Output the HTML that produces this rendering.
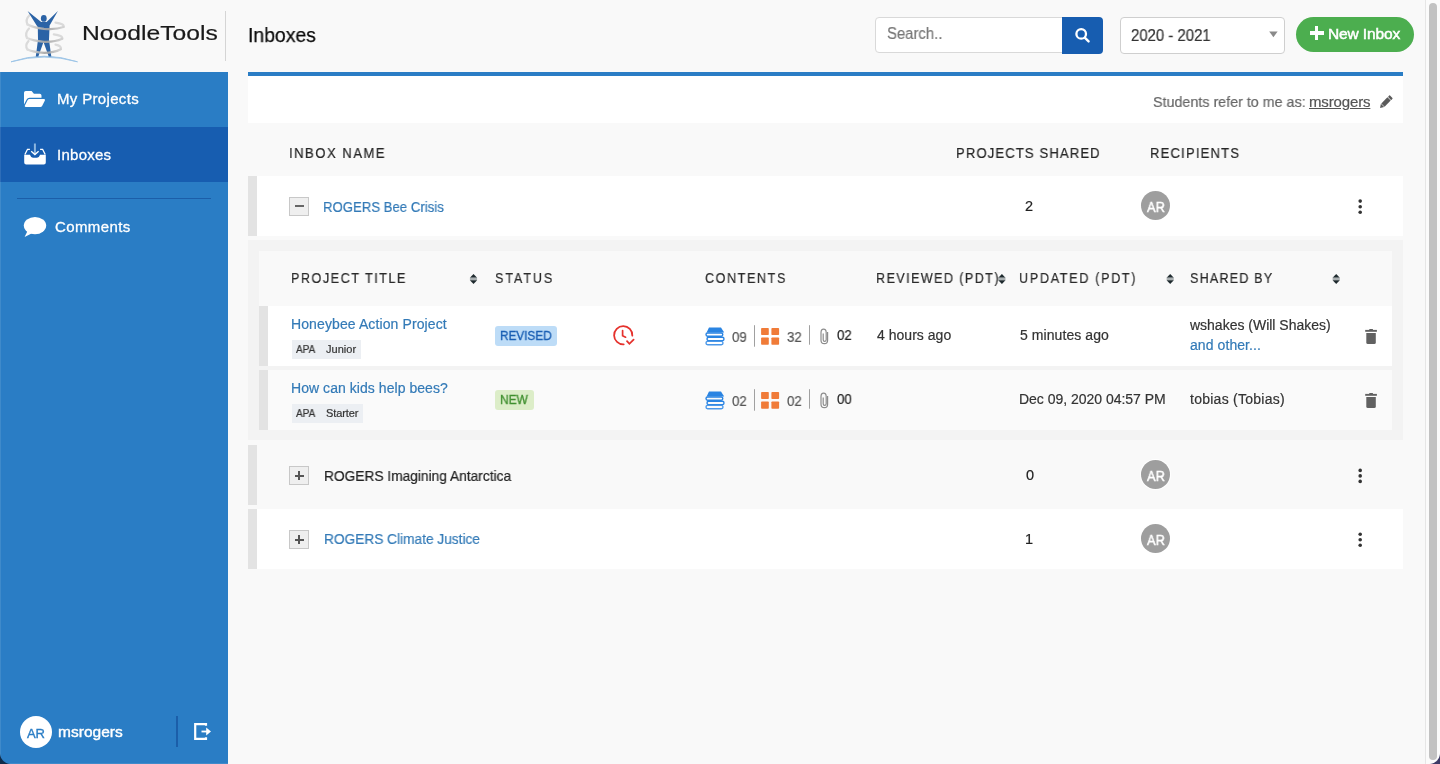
<!DOCTYPE html>
<html><head><meta charset="utf-8">
<style>
*{box-sizing:border-box;margin:0;padding:0}
html,body{width:1440px;height:764px;overflow:hidden;background:#f9f9f9;font-family:"Liberation Sans",sans-serif;color:#222}
body{position:relative}
.a{position:absolute}
.t{position:absolute;white-space:pre;will-change:transform;-webkit-text-stroke:0.2px currentColor}
svg{position:absolute;overflow:visible}
.bar{position:absolute;background:#e3e3e3}
.tog{position:absolute;left:289px;width:20px;height:19px;border:1px solid #c8c8c8;background:#efefef}
.av{position:absolute;left:1141px;width:29px;height:29px;border-radius:50%;background:#9e9e9e}
</style></head><body>
<!-- ===== header ===== -->
<svg style="left:0;top:0" width="90" height="72" viewBox="0 0 90 72">
  <defs>
    <linearGradient id="sw" x1="0" y1="0" x2="1" y2="0"><stop offset="0" stop-color="#dedede"/><stop offset="0.55" stop-color="#a4a4a4"/><stop offset="1" stop-color="#d2d2d2"/></linearGradient>
    <linearGradient id="arcg" x1="0" y1="0" x2="1" y2="0"><stop offset="0" stop-color="#b9d5ee"/><stop offset="0.5" stop-color="#8fbbe0"/><stop offset="1" stop-color="#b9d5ee"/></linearGradient>
  </defs>
  <path d="M11 61.8 Q44 50.6 77.5 61.8 Q44 52.4 11 61.8 Z" fill="url(#arcg)" stroke="#9cc4e6" stroke-width="0.9"/>
  <g fill="none" stroke="#dadada" stroke-width="2.2" stroke-linecap="round">
    <path d="M29.5 15.2 Q25 19.5 27.5 24.5"/>
    <path d="M55.5 22.6 Q64.5 23.8 63.6 27"/>
    <path d="M29 28.5 Q24.5 33 27 38"/>
    <path d="M53.8 34.3 Q63 35.4 62.2 38.8"/>
    <path d="M28.5 41 Q24.5 45.5 27.5 49.5"/>
    <path d="M55.5 44.6 Q61.8 45.8 60.8 49.2"/>
  </g>
  <path d="M27.6 11.1 L41.2 22 L46.6 22 L57.9 11.1 L49.6 25.6 L49 39.8 L51.3 56.4 L48.7 56.4 L43.5 42 L38.3 56.4 L35.8 56.4 L38 39.8 L37.8 27.2 Z" fill="#2b63a6"/>
  <ellipse cx="43.8" cy="18.4" rx="2.9" ry="3.4" fill="#2b63a6"/>
  <g fill="none" stroke="url(#sw)" stroke-width="2.3" stroke-linecap="round" opacity="0.9">
    <path d="M27.5 24.5 Q33 27.5 44 28.8 Q56 29.8 63.6 27"/>
    <path d="M27 38 Q33 40.8 44 41.8 Q55 42.2 62.2 38.8"/>
    <path d="M27.5 49.5 Q33 52.2 44 52.8 Q54 52.8 60.8 49.2"/>
  </g>
</svg>
<div class="a" style="left:225px;top:11px;width:1px;height:50px;background:#d5d5d5"></div>

<!-- search -->
<div class="a" style="left:875px;top:17px;width:188px;height:36px;background:#fff;border:1px solid #d9d9d9;border-radius:4px 0 0 4px"></div>
<div class="a" style="left:1062px;top:17px;width:41px;height:37px;background:#175db0;border-radius:0 4px 4px 0"></div>
<svg style="left:1070px;top:22px" width="25" height="25" viewBox="1070 22 25 25">
  <circle cx="1081.2" cy="33.9" r="4.8" fill="none" stroke="#fff" stroke-width="2.3"/>
  <path d="M1085 37.8 L1088.6 41.4" stroke="#fff" stroke-width="2.4" stroke-linecap="round"/>
</svg>
<!-- select -->
<div class="a" style="left:1120px;top:17px;width:165px;height:37px;background:#fff;border:1px solid #cfcfcf;border-radius:4px"></div>
<svg style="left:1265px;top:28px" width="16" height="12" viewBox="1265 28 16 12">
  <path d="M1269.2 31.5 L1277.6 31.5 L1273.4 37.3 Z" fill="#8a8a8a"/>
</svg>
<!-- new inbox -->
<div class="a" style="left:1296px;top:17px;width:118px;height:35px;background:#4cae4f;border-radius:18px"></div>
<div class="a" style="left:1314.8px;top:26px;width:3.4px;height:13.8px;background:#fff"></div>
<div class="a" style="left:1309.5px;top:31.2px;width:14.1px;height:3.6px;background:#fff"></div>

<!-- ===== sidebar ===== -->
<div class="a" style="left:0;top:72px;width:228px;height:692px;background:#2a7dc5"></div>
<div class="a" style="left:0;top:127px;width:228px;height:55px;background:#175db0"></div>
<div class="a" style="left:17px;top:198px;width:194px;height:1px;background:#1b5ea9"></div>
<!-- folder icon -->
<svg style="left:24px;top:91px" width="21" height="16" viewBox="0 64 576 384" preserveAspectRatio="none">
  <path fill="#fff" d="M572.694 292.093L500.27 416.248A63.997 63.997 0 0 1 444.989 448H45.025c-18.523 0-30.064-20.093-20.731-36.093l72.424-124.155A64 64 0 0 1 152 256h399.964c18.523 0 30.064 20.093 20.73 36.093zM152 224h328v-48c0-26.51-21.49-48-48-48H272l-64-64H48C21.49 64 0 85.49 0 112v278.046l69.077-118.418C86.214 242.25 117.989 224 152 224z"/>
</svg>
<!-- inbox icon -->
<svg style="left:20px;top:140px" width="30" height="28" viewBox="20 140 30 28">
  <path d="M34.9 143.5 L34.9 154" stroke="#8cb6de" stroke-width="2"/>
  <path d="M31.2 151.2 L34.9 154.6 L38.6 151.2" fill="none" stroke="#fff" stroke-width="1.3"/>
  <path d="M29.9 149.3 L27.5 149.3 L24.9 154.5 M40.1 149.3 L42.6 149.3 L45.2 154.5" fill="none" stroke="#fff" stroke-width="1.3"/>
  <path d="M24.2 154.7 L29.9 154.7 Q31 157.8 33 157.8 L37 157.8 Q39 157.8 40.1 154.7 L45.8 154.7 L45.8 162.4 Q45.8 164.4 43.8 164.4 L26.2 164.4 Q24.2 164.4 24.2 162.4 Z" fill="#fff"/>
</svg>
<!-- comment icon -->
<svg style="left:20px;top:212px" width="30" height="30" viewBox="20 212 30 30">
  <ellipse cx="35" cy="225.6" rx="11.2" ry="8.7" fill="#fff"/>
  <path d="M27.5 231 L24.6 237 L31.5 233.5 Z" fill="#fff"/>
</svg>
<!-- bottom user -->
<div class="a" style="left:19.5px;top:715.5px;width:32px;height:32px;border-radius:50%;background:#fff"></div>
<div class="a" style="left:176px;top:716px;width:2px;height:31px;background:#1b5ea9"></div>
<svg style="left:188px;top:716px" width="28" height="30" viewBox="188 716 28 30">
  <path d="M206 725.8 L206 724.1 L195.2 724.1 L195.2 738.9 L206 738.9 L206 737.2" fill="none" stroke="#fff" stroke-width="2.2"/>
  <path d="M201.5 731.5 L208 731.5" stroke="#fff" stroke-width="1.8"/>
  <path d="M206.2 727.6 L211 731.5 L206.2 735.4 Z" fill="#fff"/>
</svg>

<!-- ===== panel ===== -->
<div class="a" style="left:248px;top:72px;width:1155px;height:51px;background:#fff;border-top:4px solid #2a7dc5"></div>
<svg style="left:1376px;top:92px" width="20" height="20" viewBox="1376 92 20 20">
  <g transform="rotate(45 1386 102)">
    <rect x="1383.7" y="94.6" width="4.6" height="2.4" rx="0.6" fill="#5a5a5a"/>
    <rect x="1383.7" y="97.7" width="4.6" height="8.6" fill="#5a5a5a"/>
    <path d="M1383.7 106.9 L1388.3 106.9 L1386 110.4 Z" fill="#5a5a5a"/>
  </g>
</svg>

<!-- ===== rows ===== -->
<div class="a" style="left:248px;top:176px;width:1155px;height:60px;background:#fff"></div>
<div class="bar" style="left:248px;top:176px;width:9px;height:60px"></div>
<div class="tog" style="top:197px"></div>
<div class="a" style="left:295px;top:205.3px;width:8.5px;height:1.7px;background:#666"></div>

<!-- expanded -->
<div class="a" style="left:248px;top:240px;width:1155px;height:200px;background:#f3f3f3"></div>
<div class="a" style="left:259px;top:251px;width:1133px;height:55px;background:#f9f9f9"></div>
<div class="a" style="left:259px;top:306px;width:1133px;height:60px;background:#fff"></div>
<div class="bar" style="left:259px;top:306px;width:9px;height:60px"></div>
<div class="a" style="left:259px;top:370px;width:1133px;height:60px;background:#fafafa"></div>
<div class="bar" style="left:259px;top:370px;width:9px;height:60px"></div>

<div class="a" style="left:248px;top:445px;width:1155px;height:60px;background:#f9f9f9"></div>
<div class="bar" style="left:248px;top:445px;width:9px;height:60px"></div>
<div class="tog" style="top:466px"></div>
<div class="a" style="left:295px;top:474.5px;width:8.6px;height:2px;background:#555"></div>
<div class="a" style="left:298.3px;top:471px;width:2px;height:9px;background:#555"></div>

<div class="a" style="left:248px;top:509px;width:1155px;height:60px;background:#fff"></div>
<div class="bar" style="left:248px;top:509px;width:9px;height:60px"></div>
<div class="tog" style="top:530px"></div>
<div class="a" style="left:295px;top:538.5px;width:8.6px;height:2px;background:#555"></div>
<div class="a" style="left:298.3px;top:535px;width:2px;height:9px;background:#555"></div>

<!-- avatars -->
<div class="av" style="top:191px"></div>
<div class="av" style="top:460px;box-shadow:0 0 0 1px #fff"></div>
<div class="av" style="top:524px"></div>
<!-- kebabs -->
<svg style="left:1350px;top:190px" width="20" height="400" viewBox="1350 190 20 400">
  <g fill="#333">
    <circle cx="1360.2" cy="201.1" r="1.8"/><circle cx="1360.2" cy="206.7" r="1.8"/><circle cx="1360.2" cy="212.2" r="1.8"/>
    <circle cx="1360.2" cy="470.4" r="1.8"/><circle cx="1360.2" cy="475.9" r="1.8"/><circle cx="1360.2" cy="481.4" r="1.8"/>
    <circle cx="1360.2" cy="534.2" r="1.8"/><circle cx="1360.2" cy="539.7" r="1.8"/><circle cx="1360.2" cy="545.2" r="1.8"/>
  </g>
</svg>
<!-- sort icons -->
<svg style="left:460px;top:268px" width="900" height="20" viewBox="460 268 900 20">
  
  <g transform="translate(469.9 273.9)"><path d="M0 3.8 L3.6 0 L7.2 3.8 Z" fill="#1e2a2e"/><rect x="0" y="3.8" width="7.2" height="2.5" fill="#aab0b2"/><path d="M0 6.4 L3.6 10 L7.2 6.4 Z" fill="#1e2a2e"/></g>
  <g transform="translate(998.3 273.9)"><path d="M0 3.8 L3.6 0 L7.2 3.8 Z" fill="#1e2a2e"/><rect x="0" y="3.8" width="7.2" height="2.5" fill="#aab0b2"/><path d="M0 6.4 L3.6 10 L7.2 6.4 Z" fill="#1e2a2e"/></g>
  <g transform="translate(1166.6 273.9)"><path d="M0 3.8 L3.6 0 L7.2 3.8 Z" fill="#1e2a2e"/><rect x="0" y="3.8" width="7.2" height="2.5" fill="#aab0b2"/><path d="M0 6.4 L3.6 10 L7.2 6.4 Z" fill="#1e2a2e"/></g>
  <g transform="translate(1332.6 273.9)"><path d="M0 3.8 L3.6 0 L7.2 3.8 Z" fill="#1e2a2e"/><rect x="0" y="3.8" width="7.2" height="2.5" fill="#aab0b2"/><path d="M0 6.4 L3.6 10 L7.2 6.4 Z" fill="#1e2a2e"/></g>
</svg>

<!-- tags and badges -->
<div class="a" style="left:292px;top:340px;width:69px;height:19px;background:#eceff3"></div>
<div class="a" style="left:292px;top:404px;width:71px;height:19px;background:#eceff3"></div>
<div class="a" style="left:495px;top:326px;width:62px;height:20px;background:#bddcf7;border-radius:3px"></div>
<div class="a" style="left:495px;top:390px;width:39px;height:20px;background:#dcedc8;border-radius:3px"></div>

<!-- clock -->
<svg style="left:608px;top:320px" width="32" height="30" viewBox="608 320 32 30">
  <path d="M632.3 335.6 A9.1 9.1 0 1 0 623.7 344.3" fill="none" stroke="#e5322d" stroke-width="1.8" stroke-linecap="round"/>
  <path d="M622.6 330.6 L622.6 335.8 L625.6 337.2" fill="none" stroke="#e5322d" stroke-width="1.7" stroke-linecap="round"/>
  <path d="M627 341.2 L629.4 343.8 L633.6 339.6" fill="none" stroke="#e5322d" stroke-width="1.8" stroke-linecap="round"/>
</svg>

<!-- contents icons -->
<svg style="left:700px;top:320px" width="140" height="100" viewBox="700 320 140 100">
  
  <g transform="translate(0 0)">
      <path d="M709 327.5 L721 327.5 L724.2 332.6 L706.6 332.6 Z" fill="#2a84e2"/>
      <rect x="706" y="333" width="16.8" height="3.2" rx="1.6" fill="none" stroke="#2a84e2" stroke-width="1.4"/>
      <rect x="707" y="337.2" width="17" height="3.4" rx="1.7" fill="none" stroke="#2a84e2" stroke-width="1.4"/>
      <rect x="706" y="341.4" width="17" height="3.4" rx="1.7" fill="none" stroke="#4c98e8" stroke-width="1.4"/>
    </g><g transform="translate(0 0)" fill="#f07b38">
      <rect x="761.1" y="327.9" width="7.7" height="7.2" rx="0.8"/>
      <rect x="771.4" y="327.9" width="7.7" height="7.2" rx="0.8"/>
      <rect x="761.1" y="337.5" width="7.7" height="7.2" rx="0.8"/>
      <rect x="771.4" y="337.5" width="7.7" height="7.2" rx="0.8"/>
    </g><g transform="translate(0 0)">
      <path d="M827.6 332 L827.6 340.2 Q827.6 343.7 824.4 343.7 Q821 343.7 821 340.2 L821 332.7 Q821 329.2 823.6 329.2 Q826.2 329.2 826.2 332.7 L826.2 339.7 Q826.2 341.3 824.6 341.3 Q823.2 341.3 823.2 339.7 L823.2 333.4" fill="none" stroke="#8c8c8c" stroke-width="1.2"/>
    </g><g transform="translate(0 0)" fill="#a0a0a0">
      <rect x="754" y="325.2" width="1" height="21.5"/>
      <rect x="809" y="325.2" width="1" height="19.5"/>
    </g>
  <g transform="translate(0 64)">
      <path d="M709 327.5 L721 327.5 L724.2 332.6 L706.6 332.6 Z" fill="#2a84e2"/>
      <rect x="706" y="333" width="16.8" height="3.2" rx="1.6" fill="none" stroke="#2a84e2" stroke-width="1.4"/>
      <rect x="707" y="337.2" width="17" height="3.4" rx="1.7" fill="none" stroke="#2a84e2" stroke-width="1.4"/>
      <rect x="706" y="341.4" width="17" height="3.4" rx="1.7" fill="none" stroke="#4c98e8" stroke-width="1.4"/>
    </g><g transform="translate(0 64)" fill="#f07b38">
      <rect x="761.1" y="327.9" width="7.7" height="7.2" rx="0.8"/>
      <rect x="771.4" y="327.9" width="7.7" height="7.2" rx="0.8"/>
      <rect x="761.1" y="337.5" width="7.7" height="7.2" rx="0.8"/>
      <rect x="771.4" y="337.5" width="7.7" height="7.2" rx="0.8"/>
    </g><g transform="translate(0 64)">
      <path d="M827.6 332 L827.6 340.2 Q827.6 343.7 824.4 343.7 Q821 343.7 821 340.2 L821 332.7 Q821 329.2 823.6 329.2 Q826.2 329.2 826.2 332.7 L826.2 339.7 Q826.2 341.3 824.6 341.3 Q823.2 341.3 823.2 339.7 L823.2 333.4" fill="none" stroke="#8c8c8c" stroke-width="1.2"/>
    </g><g transform="translate(0 64)" fill="#a0a0a0">
      <rect x="754" y="325.2" width="1" height="21.5"/>
      <rect x="809" y="325.2" width="1" height="19.5"/>
    </g>
</svg>
<!-- trash -->
<svg style="left:1360px;top:325px" width="24" height="90" viewBox="1360 325 24 90">
  
  <g transform="translate(0 0)" fill="#616161">
    <rect x="1365.2" y="329.9" width="11.7" height="1.9"/>
    <rect x="1369.2" y="329.1" width="3.8" height="1.2" rx="0.5"/>
    <path d="M1366.3 333 L1375.8 333 L1375.8 342.6 Q1375.8 344.1 1374.3 344.1 L1367.8 344.1 Q1366.3 344.1 1366.3 342.6 Z"/>
  </g><g transform="translate(0 64)" fill="#616161">
    <rect x="1365.2" y="329.9" width="11.7" height="1.9"/>
    <rect x="1369.2" y="329.1" width="3.8" height="1.2" rx="0.5"/>
    <path d="M1366.3 333 L1375.8 333 L1375.8 342.6 Q1375.8 344.1 1374.3 344.1 L1367.8 344.1 Q1366.3 344.1 1366.3 342.6 Z"/>
  </g>
</svg>

<!-- scrollbar -->
<div class="a" style="left:1425px;top:0;width:15px;height:764px;background:#fbfbfb;border-left:1px solid #e6e6e6"></div>
<div class="a" style="left:1429px;top:3px;width:8px;height:757px;background:#c2c2c2;border-radius:4px"></div>

<!-- window edge highlight -->
<div class="a" style="left:0;top:0;width:1px;height:764px;background:rgba(255,255,255,0.1)"></div>
<div class="a" style="left:0;top:763px;width:1440px;height:1px;background:rgba(255,255,255,0.1)"></div>
<!-- window corners -->
<div class="a" style="left:0;top:753px;width:11px;height:11px;background:radial-gradient(circle at 11px 0,rgba(0,0,0,0) 10.5px,#0e2b4b 11.5px)"></div>
<div class="a" style="left:1429px;top:753px;width:11px;height:11px;background:radial-gradient(circle at 0 0,rgba(0,0,0,0) 10.5px,#3d3a66 11.5px)"></div>
<div class="t" style="left:82.13px;top:22.22px;font-size:21px;line-height:21px;color:#1a1a1a;font-weight:400;transform:scaleX(1.1747);transform-origin:0 0;-webkit-text-stroke:0.2px #1a1a1a">NoodleTools</div>
<div class="t" style="left:247.78px;top:24.97px;font-size:20px;line-height:20px;color:#0a0a0a;font-weight:400;transform:scaleX(0.9689);transform-origin:0 0;-webkit-text-stroke:0.25px #0a0a0a">Inboxes</div>
<div class="t" style="left:56.60px;top:91.40px;font-size:15px;line-height:15px;color:#fff;font-weight:400;letter-spacing:0.335px;-webkit-text-stroke:0.3px #fff">My Projects</div>
<div class="t" style="left:56.60px;top:146.50px;font-size:15px;line-height:15px;color:#fff;font-weight:400;letter-spacing:0.261px;-webkit-text-stroke:0.3px #fff">Inboxes</div>
<div class="t" style="left:54.70px;top:219.30px;font-size:15px;line-height:15px;color:#fff;font-weight:400;letter-spacing:0.383px;-webkit-text-stroke:0.3px #fff">Comments</div>
<div class="t" style="left:57.75px;top:723.68px;font-size:15.5px;line-height:15.5px;color:#fff;font-weight:400;letter-spacing:0.022px;-webkit-text-stroke:0.4px #fff">msrogers</div>
<div class="t" style="left:26.70px;top:726.79px;font-size:13px;line-height:13px;color:#2a7dc5;font-weight:400;letter-spacing:-0.171px;-webkit-text-stroke:0.35px #2a7dc5">AR</div>
<div class="t" style="left:887.20px;top:26.25px;font-size:16px;line-height:16px;color:#777;font-weight:400;transform:scaleX(0.9288);transform-origin:0 0;">Search..</div>
<div class="t" style="left:1130.50px;top:28.19px;font-size:15.6px;line-height:15.6px;color:#333;font-weight:400;transform:scaleX(0.9568);transform-origin:0 0;">2020 - 2021</div>
<div class="t" style="left:1328.20px;top:26.38px;font-size:15.5px;line-height:15.5px;color:#fff;font-weight:400;letter-spacing:-0.135px;-webkit-text-stroke:0.5px #fff">New Inbox</div>
<div class="t" style="left:1153.10px;top:93.90px;font-size:15px;line-height:15px;color:#666;font-weight:400;transform:scaleX(0.9534);transform-origin:0 0;">Students refer to me as:</div>
<div class="t" style="left:1309.30px;top:93.90px;font-size:15px;line-height:15px;color:#555;font-weight:400;letter-spacing:-0.145px;text-decoration:underline;text-underline-offset:1px">msrogers</div>
<div class="t" style="left:289.10px;top:145.72px;font-size:14.5px;line-height:14.5px;color:#262626;font-weight:400;letter-spacing:1.687px;transform:scaleX(0.9000);transform-origin:0 0;">INBOX NAME</div>
<div class="t" style="left:956.40px;top:145.72px;font-size:14.5px;line-height:14.5px;color:#262626;font-weight:400;letter-spacing:1.270px;transform:scaleX(0.9000);transform-origin:0 0;">PROJECTS SHARED</div>
<div class="t" style="left:1149.70px;top:145.72px;font-size:14.5px;line-height:14.5px;color:#262626;font-weight:400;letter-spacing:1.320px;transform:scaleX(0.9000);transform-origin:0 0;">RECIPIENTS</div>
<div class="t" style="left:323.39px;top:199.62px;font-size:14.5px;line-height:14.5px;color:#337ab7;font-weight:400;transform:scaleX(0.9082);transform-origin:0 0;">ROGERS Bee Crisis</div>
<div class="t" style="left:1025.30px;top:198.62px;font-size:14.5px;line-height:14.5px;color:#222;font-weight:400;letter-spacing:0.000px;">2</div>
<div class="t" style="left:323.55px;top:468.82px;font-size:14.5px;line-height:14.5px;color:#222;font-weight:400;transform:scaleX(0.9471);transform-origin:0 0;">ROGERS Imagining Antarctica</div>
<div class="t" style="left:1025.80px;top:467.72px;font-size:14.5px;line-height:14.5px;color:#222;font-weight:400;letter-spacing:0.000px;">0</div>
<div class="t" style="left:323.56px;top:532.32px;font-size:14.5px;line-height:14.5px;color:#337ab7;font-weight:400;transform:scaleX(0.9445);transform-origin:0 0;">ROGERS Climate Justice</div>
<div class="t" style="left:1024.50px;top:532.32px;font-size:14.5px;line-height:14.5px;color:#222;font-weight:400;letter-spacing:0.000px;">1</div>
<div class="t" style="left:1147.00px;top:199.62px;font-size:14.5px;line-height:14.5px;color:#fff;font-weight:400;transform:scaleX(0.8845);transform-origin:0 0;-webkit-text-stroke:0.45px #fff">AR</div>
<div class="t" style="left:1147.00px;top:468.72px;font-size:14.5px;line-height:14.5px;color:#fff;font-weight:400;transform:scaleX(0.8845);transform-origin:0 0;-webkit-text-stroke:0.45px #fff">AR</div>
<div class="t" style="left:1147.00px;top:532.52px;font-size:14.5px;line-height:14.5px;color:#fff;font-weight:400;transform:scaleX(0.8845);transform-origin:0 0;-webkit-text-stroke:0.45px #fff">AR</div>
<div class="t" style="left:291.00px;top:271.15px;font-size:14px;line-height:14px;color:#2a2a2a;font-weight:400;letter-spacing:1.694px;transform:scaleX(0.9000);transform-origin:0 0;">PROJECT TITLE</div>
<div class="t" style="left:494.60px;top:271.15px;font-size:14px;line-height:14px;color:#2a2a2a;font-weight:400;letter-spacing:2.104px;transform:scaleX(0.9000);transform-origin:0 0;">STATUS</div>
<div class="t" style="left:705.00px;top:271.15px;font-size:14px;line-height:14px;color:#2a2a2a;font-weight:400;letter-spacing:1.747px;transform:scaleX(0.9000);transform-origin:0 0;">CONTENTS</div>
<div class="t" style="left:876.30px;top:271.15px;font-size:14px;line-height:14px;color:#2a2a2a;font-weight:400;letter-spacing:1.555px;transform:scaleX(0.9000);transform-origin:0 0;">REVIEWED (PDT)</div>
<div class="t" style="left:1018.50px;top:271.15px;font-size:14px;line-height:14px;color:#2a2a2a;font-weight:400;letter-spacing:1.864px;transform:scaleX(0.9000);transform-origin:0 0;">UPDATED (PDT)</div>
<div class="t" style="left:1190.00px;top:271.15px;font-size:14px;line-height:14px;color:#2a2a2a;font-weight:400;letter-spacing:1.303px;transform:scaleX(0.9000);transform-origin:0 0;">SHARED BY</div>
<div class="t" style="left:291.20px;top:317.15px;font-size:14px;line-height:14px;color:#337ab7;font-weight:400;letter-spacing:0.109px;">Honeybee Action Project</div>
<div class="t" style="left:296.10px;top:344.29px;font-size:11px;line-height:11px;color:#333;font-weight:400;transform:scaleX(0.9150);transform-origin:0 0;">APA</div>
<div class="t" style="left:325.60px;top:344.29px;font-size:11px;line-height:11px;color:#333;font-weight:400;letter-spacing:0.041px;">Junior</div>
<div class="t" style="left:499.79px;top:329.09px;font-size:13px;line-height:13px;color:#1a5fb4;font-weight:400;transform:scaleX(0.9051);transform-origin:0 0;-webkit-text-stroke:0.35px #1a5fb4">REVISED</div>
<div class="t" style="left:732.20px;top:329.85px;font-size:14px;line-height:14px;color:#555;font-weight:400;transform:scaleX(0.9502);transform-origin:0 0;">09</div>
<div class="t" style="left:786.70px;top:329.85px;font-size:14px;line-height:14px;color:#555;font-weight:400;transform:scaleX(0.9502);transform-origin:0 0;">32</div>
<div class="t" style="left:836.90px;top:327.85px;font-size:14px;line-height:14px;color:#222;font-weight:400;transform:scaleX(0.9502);transform-origin:0 0;">02</div>
<div class="t" style="left:876.90px;top:327.90px;font-size:14px;line-height:14px;color:#333;font-weight:400;letter-spacing:0.024px;">4 hours ago</div>
<div class="t" style="left:1020.30px;top:327.90px;font-size:14px;line-height:14px;color:#333;font-weight:400;letter-spacing:0.070px;">5 minutes ago</div>
<div class="t" style="left:1190.00px;top:317.95px;font-size:14px;line-height:14px;color:#333;font-weight:400;letter-spacing:-0.008px;">wshakes (Will Shakes)</div>
<div class="t" style="left:1189.70px;top:338.45px;font-size:14px;line-height:14px;color:#337ab7;font-weight:400;letter-spacing:0.076px;">and other...</div>
<div class="t" style="left:291.20px;top:381.25px;font-size:14px;line-height:14px;color:#337ab7;font-weight:400;letter-spacing:0.052px;">How can kids help bees?</div>
<div class="t" style="left:296.10px;top:408.09px;font-size:11px;line-height:11px;color:#333;font-weight:400;transform:scaleX(0.9150);transform-origin:0 0;">APA</div>
<div class="t" style="left:325.50px;top:408.09px;font-size:11px;line-height:11px;color:#333;font-weight:400;letter-spacing:-0.091px;">Starter</div>
<div class="t" style="left:499.68px;top:393.49px;font-size:13px;line-height:13px;color:#3f8f2f;font-weight:400;transform:scaleX(0.9182);transform-origin:0 0;-webkit-text-stroke:0.35px #3f8f2f">NEW</div>
<div class="t" style="left:732.20px;top:393.85px;font-size:14px;line-height:14px;color:#555;font-weight:400;transform:scaleX(0.9502);transform-origin:0 0;">02</div>
<div class="t" style="left:786.70px;top:393.85px;font-size:14px;line-height:14px;color:#555;font-weight:400;transform:scaleX(0.9502);transform-origin:0 0;">02</div>
<div class="t" style="left:836.90px;top:391.85px;font-size:14px;line-height:14px;color:#222;font-weight:400;transform:scaleX(0.9502);transform-origin:0 0;">00</div>
<div class="t" style="left:1019.00px;top:392.45px;font-size:14px;line-height:14px;color:#333;font-weight:400;letter-spacing:-0.022px;">Dec 09, 2020 04:57 PM</div>
<div class="t" style="left:1190.20px;top:392.45px;font-size:14px;line-height:14px;color:#333;font-weight:400;letter-spacing:0.259px;">tobias (Tobias)</div>
</body></html>
